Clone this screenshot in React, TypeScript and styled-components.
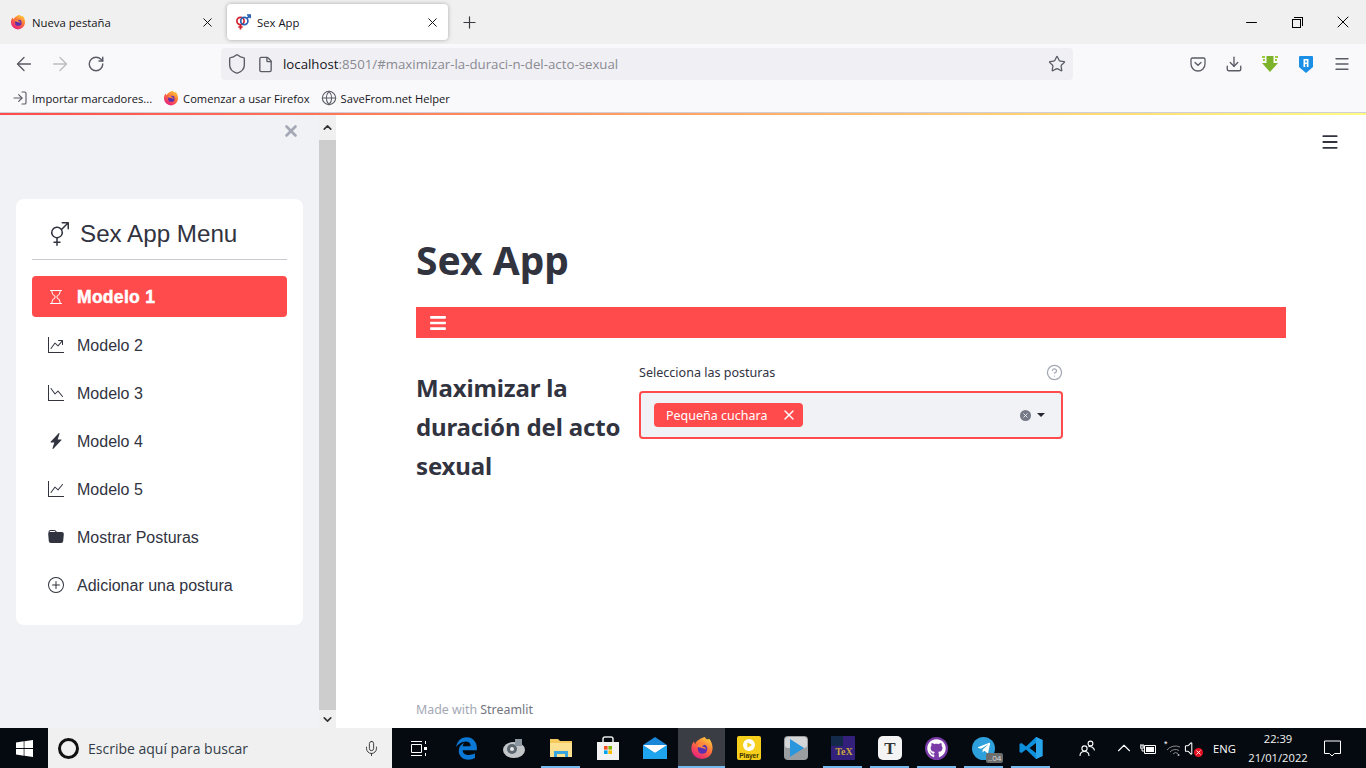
import React from "react";
import styled, { createGlobalStyle } from "styled-components";
import {
  ArrowLeft,
  ArrowRight,
  RotateCw,
  Shield,
  File,
  Star,
  Download,
  Menu,
  Plus,
  X,
  Minus,
  Globe,
  LogIn,
  Mic,
  ChevronUp,
  Volume,
  CircleHelp,
} from "lucide-react";
import {
  BsGenderAmbiguous,
  BsHourglass,
  BsGraphUpArrow,
  BsGraphDown,
  BsGraphUp,
  BsLightningChargeFill,
  BsFolderFill,
  BsPlusCircle,
} from "react-icons/bs";
import { FaBars, FaGithub, FaTelegramPlane, FaEdgeLegacy } from "react-icons/fa";

const Global = createGlobalStyle`
  html, body { margin: 0; padding: 0; height: 100%; overflow: hidden; background: #fff; }
  * { box-sizing: border-box; }
`;

const Page = styled.div`
  width: 1366px;
  height: 768px;
  display: flex;
  flex-direction: column;
  font-family: "Open Sans", "Liberation Sans", sans-serif;
`;

/* browser chrome */
const TabStrip = styled.div`
  height: 44px;
  background: #f0f0f0;
  display: flex;
  align-items: center;
  padding: 0 0 0 2px;
`;

const Tab = styled.div<{ $active?: boolean }>`
  width: 221px;
  height: 36px;
  margin-right: ${({ $active }) => ($active ? "12px" : "4px")};
  padding: 0 8px;
  display: flex;
  align-items: center;
  gap: 6px;
  border-radius: 4px;
  background: ${({ $active }) => ($active ? "#fff" : "transparent")};
  box-shadow: ${({ $active }) => ($active ? "0 0 4px rgba(0,0,0,.3)" : "none")};
  font-size: 11.3px;
  color: #15141a;
`;

const TabLabel = styled.span`
  flex: 1;
  white-space: nowrap;
`;

const StripSpacer = styled.div`
  flex: 1;
`;

const WinButton = styled.div`
  width: 46px;
  height: 44px;
  display: flex;
  align-items: center;
  justify-content: center;
  color: #000;
`;

const RestoreIcon = styled.div`
  width: 9px;
  height: 9px;
  border: 1px solid #000;
  position: relative;
  top: 1px;
  left: -1px;
  &::after {
    content: "";
    position: absolute;
    top: -3px;
    left: 1px;
    width: 8px;
    height: 8px;
    border-top: 1px solid #000;
    border-right: 1px solid #000;
  }
`;

const Toolbar = styled.div`
  height: 44px;
  background: #f9f9fb;
  display: flex;
  align-items: center;
  padding: 0 6px 4px;
  color: #5b5b66;
`;

const ToolButton = styled.div<{ $dim?: boolean }>`
  width: 36px;
  height: 32px;
  display: flex;
  align-items: center;
  justify-content: center;
  color: ${({ $dim }) => ($dim ? "#bcbcc2" : "#5b5b66")};
`;

const UrlBar = styled.div`
  width: 852px;
  height: 32px;
  margin: 0 107px;
  padding: 0 7px 0 5px;
  display: flex;
  align-items: center;
  background: #f0f0f4;
  border-radius: 4px;
  font-size: 13.25px;
  color: #8a8a92;
`;

const UrlIcon = styled.div<{ $w: number }>`
  width: ${({ $w }) => $w}px;
  display: flex;
  align-items: center;
  color: #5b5b66;
`;

const UrlText = styled.div`
  flex: 1;
  white-space: nowrap;
`;

const UrlHost = styled.span`
  color: #15141a;
`;

const BookmarkBar = styled.div`
  height: 24px;
  background: #f9f9fb;
  display: flex;
  align-items: center;
  padding: 0 0 4px 12px;
  gap: 11px;
  font-size: 11.15px;
  color: #15141a;
`;

const Bookmark = styled.div`
  display: flex;
  align-items: center;
  gap: 4px;
  white-space: nowrap;
`;

const GradientLine = styled.div`
  height: 3px;
  border-top: 1px solid #cfcfd8;
  background: linear-gradient(90deg, #ff4b4b, #fffd80);
`;

/* app body */
const Body = styled.div`
  flex: 1;
  display: flex;
  min-height: 0;
`;

const Sidebar = styled.section`
  width: 319px;
  background: #f0f2f6;
  padding: 0 16px;
`;

const SidebarClose = styled.div`
  height: 84px;
  padding: 7px 3px 0 0;
  display: flex;
  justify-content: flex-end;
  color: #a3a8b4;
`;

const MenuCard = styled.nav`
  background: #fff;
  border-radius: 8px;
  height: 426px;
  padding: 0 16px;
  font-family: "Liberation Sans", Arial, sans-serif;
  color: #31333f;
`;

const MenuHead = styled.div`
  height: 61px;
  padding: 10px 0 0 13px;
  margin-bottom: 16px;
  display: flex;
  align-items: center;
  gap: 11px;
  border-bottom: 1px solid #c9cad0;
  font-size: 24.2px;
`;

const MenuItem = styled.div<{ $active?: boolean }>`
  height: 41px;
  margin-bottom: 7px;
  padding-left: 16px;
  display: flex;
  align-items: center;
  gap: 13px;
  border-radius: 4px;
  background: ${({ $active }) => ($active ? "#ff4b4b" : "transparent")};
  color: ${({ $active }) => ($active ? "#fff" : "#31333f")};
`;

const MenuLabel = styled.span<{ $active?: boolean }>`
  padding-top: 2px;
  font-size: ${({ $active }) => ($active ? "17.5px" : "16px")};
  font-weight: ${({ $active }) => ($active ? 700 : 400)};
  -webkit-text-stroke: ${({ $active }) => ($active ? "0.5px #fff" : "0")};
  letter-spacing: ${({ $active }) => ($active ? "0.3px" : "0")};
`;

const Scrollbar = styled.div`
  width: 17px;
  background: #f0f0f0;
  display: flex;
  flex-direction: column;
  align-items: center;
  color: #333;
`;

const ScrollArrow = styled.div<{ $h: number }>`
  height: ${({ $h }) => $h}px;
  width: 100%;
  display: flex;
  align-items: center;
  justify-content: center;
`;

const ScrollThumb = styled.div`
  width: 100%;
  flex: 1;
  background: #cdcdcd;
`;

const Main = styled.main`
  flex: 1;
  display: flex;
  flex-direction: column;
  padding: 0 80px;
  color: #31333f;
  font-family: "Noto Sans", "Open Sans", sans-serif;
`;

const MenuRow = styled.div`
  height: 120px;
  margin-right: -54px;
  padding-top: 17px;
  display: flex;
  justify-content: flex-end;
  color: #31333f;
`;

const Title = styled.h1`
  margin: 0;
  height: 50px;
  line-height: 50px;
  font-size: 39px;
  font-weight: 700;
`;

const RedBar = styled.div`
  height: 31px;
  margin-top: 22px;
  padding-left: 13px;
  background: #ff4b4b;
  color: #fff;
  display: flex;
  align-items: center;
`;

const Columns = styled.div`
  margin-top: 26px;
  display: grid;
  grid-template-columns: 207px 424px;
  column-gap: 16px;
`;

const Heading = styled.h3`
  margin: 4px 0 0;
  font-size: 24px;
  line-height: 39px;
  font-weight: 700;
  letter-spacing: -0.15px;
`;

const LabelRow = styled.div`
  height: 16px;
  display: flex;
  align-items: center;
  justify-content: space-between;
  font-size: 12.55px;
`;

const HelpMark = styled.div`
  display: flex;
  color: #a3a8b4;
`;

const Select = styled.div`
  height: 48px;
  margin-top: 11px;
  padding: 0 13px;
  border: 2px solid #ff4b4b;
  border-radius: 4px;
  background: #f0f2f6;
  display: flex;
  align-items: center;
`;

const Tag = styled.div`
  height: 24px;
  width: 149px;
  padding: 0 6px 0 12px;
  display: flex;
  align-items: center;
  justify-content: space-between;
  background: #ff4b4b;
  border-radius: 4px;
  color: #fff;
  font-size: 12.5px;
  white-space: nowrap;
`;

const SelectEnd = styled.div`
  margin-left: auto;
  display: flex;
  align-items: center;
  gap: 6px;
  padding-right: 3px;
`;

const ClearDot = styled.div`
  width: 11px;
  height: 11px;
  border-radius: 50%;
  background: #767986;
  display: flex;
  align-items: center;
  justify-content: center;
  color: #f0f2f6;
`;

const Caret = styled.div`
  width: 0;
  height: 0;
  border-left: 4px solid transparent;
  border-right: 4px solid transparent;
  border-top: 4px solid #262730;
`;

const Footer = styled.div`
  margin-top: auto;
  padding-bottom: 10px;
  font-size: 12.4px;
  color: #a3a8b4;
`;

const FooterBrand = styled.span`
  color: #73757f;
`;

/* taskbar */
const Taskbar = styled.div`
  height: 40px;
  background: #050a10;
  display: flex;
  align-items: stretch;
`;

const StartButton = styled.div`
  width: 48px;
  display: flex;
  align-items: center;
  justify-content: center;
`;

const SearchBox = styled.div`
  width: 344px;
  margin-right: 4px;
  background: #f0f0f0;
  display: flex;
  align-items: center;
  padding: 0 12px 0 10px;
  font-size: 14px;
  color: #333c48;
`;

const SearchRing = styled.div`
  width: 21px;
  height: 21px;
  margin-right: 9px;
  border-radius: 50%;
  border: 3px solid #111;
`;

const SearchText = styled.div`
  flex: 1;
`;

const TaskSlot = styled.div<{ $open?: boolean; $active?: boolean }>`
  width: 47px;
  display: flex;
  align-items: center;
  justify-content: center;
  position: relative;
  background: ${({ $active }) => ($active ? "#3a3d43" : "transparent")};
  &::after {
    content: "";
    display: ${({ $open, $active }) => ($open || $active ? "block" : "none")};
    position: absolute;
    bottom: 0;
    height: 2px;
    left: ${({ $active }) => ($active ? "0" : "4px")};
    right: ${({ $active }) => ($active ? "0" : "4px")};
    background: #76b9ed;
  }
`;

const Badge = styled.span`
  position: absolute;
  left: 26px;
  bottom: 5px;
  padding: 0 2px;
  height: 10px;
  line-height: 10px;
  border-radius: 2px;
  background: #6e6e6e;
  color: #ddd;
  font-size: 8px;
`;

const IconDisc = styled.div<{ $bg: string; $size: number }>`
  width: ${({ $size }) => $size}px;
  height: ${({ $size }) => $size}px;
  border-radius: 50%;
  background: ${({ $bg }) => $bg};
  display: flex;
  align-items: center;
  justify-content: center;
  color: #fff;
`;

const Tray = styled.div`
  margin-left: auto;
  padding-right: 15px;
  display: flex;
  align-items: center;
  color: #fff;
  font-size: 11.2px;
`;

const TrayItem = styled.div<{ $w: number; $gap?: number }>`
  width: ${({ $w }) => $w}px;
  margin-right: ${({ $gap }) => $gap ?? 0}px;
  display: flex;
  align-items: center;
  justify-content: center;
  position: relative;
`;

const VolumeItem = styled(TrayItem)`
  justify-content: flex-start;
`;

const MuteMark = styled.span`
  position: absolute;
  right: 3px;
  bottom: 0;
  width: 9px;
  height: 9px;
  border-radius: 50%;
  background: #e81123;
  display: flex;
  align-items: center;
  justify-content: center;
`;

const Clock = styled.div`
  width: 70px;
  text-align: center;
  line-height: 19px;
  font-size: 11.2px;
  color: #f2f2f2;
`;

const FirefoxLogo = ({ size }: { size: number }) => (
  <svg width={size} height={size} viewBox="0 0 24 24">
    <defs>
      <linearGradient id={`ff${size}`} x1="0.8" y1="0" x2="0.2" y2="1">
        <stop offset="0" stopColor="#ffd23c" />
        <stop offset="0.45" stopColor="#ff7139" />
        <stop offset="1" stopColor="#e31587" />
      </linearGradient>
    </defs>
    <path
      d="M15 1c.8 2.5 3 3 4 1.500 2.500 2.500 3.600 6.500 3.600 10a10.600 10.600 0 1 1-21.200 0c0-3 1-5.400 2.600-7.200.1 1.200.5 2.200 1.300 2.600C6 5 10 2.500 15 1z"
      fill={`url(#ff${size})`}
    />
    <circle cx="12.5" cy="13" r="4.8" fill="#5b2fb0" />
    <path d="M7 10c2.500-2.500 6.500-3 9-1-2-.2-3.500.4-4 1.400 2 0 4 1 4 3.200-2-1.800-7-1.600-9-3.600z" fill="#ff8a3c" />
  </svg>
);

const SexFavicon = () => (
  <svg width="16" height="16" viewBox="0 0 16 16" fill="none" strokeWidth="1.7">
    <circle cx="5.5" cy="7" r="3.6" stroke="#d2202c" />
    <path d="M5.500 10.600V15.500M3.300 13h4.400" stroke="#d2202c" />
    <circle cx="9.3" cy="7" r="3.6" stroke="#2a62b5" />
    <path d="M12 4.300 15 1.300M12 1h3.300v3.300" stroke="#2a62b5" />
  </svg>
);

const PocketIcon = () => (
  <svg width="16" height="16" viewBox="0 0 16 16" fill="none" stroke="#5b5b66" strokeWidth="1.3">
    <path d="M2.300 2h11.400c.7 0 1.300.6 1.300 1.300V8A7 7 0 0 1 1 8V3.300C1 2.600 1.600 2 2.300 2z" />
    <path d="M5 6.500 8 9.300l3-2.800" strokeLinecap="round" />
  </svg>
);

const GreenArrow = () => (
  <svg width="16" height="16" viewBox="0 0 16 16">
    <path d="M4.500 0h7v7H16l-8 9-8-9h4.500z" fill="#7db32a" />
    <path d="M0 0h3v2H0zM13 0h3v2h-3zM1 3h2v2H1zM13 3h2v2h-2z" fill="#9ccb3f" />
  </svg>
);

const AddonShield = () => (
  <svg width="14" height="17" viewBox="0 0 14 17">
    <path d="M1 0h12a1 1 0 0 1 1 1v10l-7 6-7-6V1a1 1 0 0 1 1-1z" fill="#1b8fe6" />
    <path d="M4.500 3h5v8H7.800V8H6.200v3H4.500zM6.200 4.600v2h1.600v-2z" fill="#fff" />
  </svg>
);

const WindowsLogo = () => (
  <svg width="17" height="17" viewBox="0 0 17 17" fill="#fff">
    <path d="M0 2.400 7.700 1.300v6.800H0zM8.400 1.200 17 0v8.100H8.400zM0 8.900h7.700v6.800L0 14.600zM8.400 8.900H17V17l-8.600-1.200z" />
  </svg>
);

const TaskViewIcon = () => (
  <svg width="17" height="17" viewBox="0 0 17 17" fill="none" stroke="#fff">
    <path d="M.5 4.500h10v8H.5zM0 1.500h11M0 15.500h11M14.500 1v3M14.500 13v3" />
    <path d="M13 7h3v3h-3z" fill="#fff" stroke="none" />
  </svg>
);

const DiskIcon = () => (
  <svg width="24" height="24" viewBox="0 0 24 24">
    <ellipse cx="12" cy="14" rx="11" ry="8" fill="#c3c6c9" />
    <circle cx="10" cy="13" r="5" fill="#5d6770" />
    <circle cx="10" cy="13" r="2" fill="#e6e8ea" />
    <path d="M13 3h7v7h-7z" fill="#8c97a1" />
  </svg>
);

const FolderIcon = () => (
  <svg width="22" height="20" viewBox="0 0 22 20">
    <path d="M0 1h8l2 2h12v16H0z" fill="#f4c95d" />
    <path d="M0 5h22v14H0z" fill="#fbe08f" />
    <path d="M4 13h14v6h-3v-3H7v3H4z" fill="#3ba6dd" />
  </svg>
);

const StoreIcon = () => (
  <svg width="24" height="24" viewBox="0 0 24 24">
    <path d="M7 6V3a2 2 0 0 1 2-2h6a2 2 0 0 1 2 2v3" fill="none" stroke="#e6e6e6" strokeWidth="1.5" />
    <path d="M1 6h22v18H1z" fill="#f3f3f3" />
    <path d="M8 10h3.600v3.600H8z" fill="#f25022" />
    <path d="M12.400 10H16v3.600h-3.600z" fill="#7fba00" />
    <path d="M8 14.400h3.600V18H8z" fill="#00a4ef" />
    <path d="M12.400 14.400H16V18h-3.600z" fill="#ffb900" />
  </svg>
);

const MailIcon = () => (
  <svg width="24" height="22" viewBox="0 0 24 22">
    <path d="M0 8 12 0l12 8v14H0z" fill="#1a86d8" />
    <path d="M0 8h24L12 16z" fill="#fff" />
    <path d="M0 8.500 12 16 24 8.500V22H0z" fill="#1fa5ee" />
  </svg>
);

const PlayerIcon = () => (
  <svg width="24" height="24" viewBox="0 0 24 24">
    <rect width="24" height="24" rx="2" fill="#f5cf1b" />
    <circle cx="12" cy="9" r="6" fill="#fff" />
    <path d="M10.300 6.300 15 9l-4.700 2.700z" fill="#f5cf1b" />
    <text x="12" y="21.5" fontSize="6.5" fontWeight="700" textAnchor="middle" fontFamily="Liberation Sans" fill="#3a3000">
      Player
    </text>
  </svg>
);

const PlayIcon = () => (
  <svg width="24" height="24" viewBox="0 0 24 24">
    <rect width="24" height="24" rx="4" fill="#9b9ea1" />
    <rect x="1" y="1" width="22" height="11" rx="3" fill="#d4d6d8" />
    <path d="M6 3 20 12 6 21z" fill="#2a97dd" />
  </svg>
);

const TexIcon = () => (
  <svg width="24" height="24" viewBox="0 0 24 24">
    <rect width="24" height="24" rx="1" fill="#33207a" />
    <path d="M0 0h12v10H0z" fill="#132a4a" />
    <text x="13" y="19" fontSize="10" fontWeight="700" textAnchor="middle" fontFamily="Liberation Serif" fill="#c9a63a">
      TeX
    </text>
  </svg>
);

const TypeTile = () => (
  <svg width="24" height="24" viewBox="0 0 24 24">
    <rect width="24" height="24" rx="5" fill="#f4f4f4" />
    <text x="12" y="18" fontSize="17" fontWeight="700" textAnchor="middle" fontFamily="Liberation Serif" fill="#333">
      T
    </text>
  </svg>
);

const CodeIcon = () => (
  <svg width="24" height="24" viewBox="0 0 24 24">
    <path d="M17 1 23.500 4v16L17 23 7 13.500 2.500 17 .5 16V8l2-1L7 10.500z" fill="#0e8fdb" />
    <path d="M17 7 10.500 12 17 17z" fill="#050a10" />
    <path d="M17 1 23.500 4v16L17 23z" fill="#28a5ea" />
  </svg>
);

const PeopleIcon = () => (
  <svg width="17" height="17" viewBox="0 0 17 17" fill="none" stroke="#fff" strokeWidth="1.1">
    <circle cx="5.5" cy="8.5" r="2.6" />
    <path d="M1 16c0-3 2-4.500 4.500-4.500S10 13 10 16" />
    <circle cx="11.5" cy="3.5" r="2.4" />
    <path d="M9.500 6.600c2.800-.5 5.500.8 6 3.900" />
  </svg>
);

const BatteryIcon = () => (
  <svg width="17" height="13" viewBox="0 0 17 13" fill="none" stroke="#fff">
    <path d="M4.500 3.500h11v8h-11z" />
    <path d="M6 5h8v5H6z" fill="#fff" stroke="none" />
    <path d="M1 2v2M3 2v2M0 4h4v2H0zM2 6v3h2" strokeWidth="1" />
  </svg>
);

const WifiIcon = () => (
  <svg width="17" height="17" viewBox="0 0 17 17" fill="none" stroke="#8a8a8a">
    <path d="M3 10a11 11 0 0 1 13-3M6 12a7 7 0 0 1 9-1.500M9 14a3.500 3.500 0 0 1 5-.5" />
    <circle cx="14.5" cy="15" r="1" fill="#bbb" stroke="none" />
    <text x="0" y="7" fontSize="9" fill="#fff" stroke="none" fontFamily="Liberation Sans">
      *
    </text>
  </svg>
);

const BubbleIcon = () => (
  <svg width="17" height="17" viewBox="0 0 17 17" fill="none" stroke="#fff">
    <path d="M.5 1h16v12.500h-6L8 16l-2.500-2.500h-5z" />
  </svg>
);

const menuItems = [
  { label: "Modelo 2", Icon: BsGraphUpArrow },
  { label: "Modelo 3", Icon: BsGraphDown },
  { label: "Modelo 4", Icon: BsLightningChargeFill },
  { label: "Modelo 5", Icon: BsGraphUp },
  { label: "Mostrar Posturas", Icon: BsFolderFill },
  { label: "Adicionar una postura", Icon: BsPlusCircle },
];

export default function App() {
  return (
    <Page>
      <Global />
      <TabStrip>
        <Tab>
          <FirefoxLogo size={16} />
          <TabLabel>Nueva pestaña</TabLabel>
          <X size={15} strokeWidth={1.6} color="#15141a" />
        </Tab>
        <Tab $active>
          <SexFavicon />
          <TabLabel>Sex App</TabLabel>
          <X size={15} strokeWidth={1.6} color="#15141a" />
        </Tab>
        <Plus size={19} strokeWidth={1.5} color="#3a3a40" />
        <StripSpacer />
        <WinButton>
          <Minus size={17} strokeWidth={1.4} />
        </WinButton>
        <WinButton>
          <RestoreIcon />
        </WinButton>
        <WinButton>
          <X size={20} strokeWidth={1.2} />
        </WinButton>
      </TabStrip>
      <Toolbar>
        <ToolButton>
          <ArrowLeft size={22} strokeWidth={1.5} />
        </ToolButton>
        <ToolButton $dim>
          <ArrowRight size={22} strokeWidth={1.5} />
        </ToolButton>
        <ToolButton>
          <RotateCw size={18} strokeWidth={1.9} />
        </ToolButton>
        <UrlBar>
          <UrlIcon $w={31}>
            <Shield size={22} strokeWidth={1.5} />
          </UrlIcon>
          <UrlIcon $w={26}>
            <File size={17} strokeWidth={1.9} />
          </UrlIcon>
          <UrlText>
            <UrlHost>localhost</UrlHost>:8501/#maximizar-la-duraci-n-del-acto-sexual
          </UrlText>
          <Star size={18} strokeWidth={1.7} color="#5b5b66" />
        </UrlBar>
        <ToolButton>
          <PocketIcon />
        </ToolButton>
        <ToolButton>
          <Download size={18} strokeWidth={1.8} />
        </ToolButton>
        <ToolButton>
          <GreenArrow />
        </ToolButton>
        <ToolButton>
          <AddonShield />
        </ToolButton>
        <ToolButton>
          <Menu size={18} strokeWidth={1.7} />
        </ToolButton>
      </Toolbar>
      <BookmarkBar>
        <Bookmark>
          <LogIn size={16} strokeWidth={1.7} color="#5b5b66" />
          Importar marcadores...
        </Bookmark>
        <Bookmark>
          <FirefoxLogo size={16} />
          Comenzar a usar Firefox
        </Bookmark>
        <Bookmark>
          <Globe size={16} strokeWidth={1.6} color="#5b5b66" />
          SaveFrom.net Helper
        </Bookmark>
      </BookmarkBar>
      <GradientLine />
      <Body>
        <Sidebar>
          <SidebarClose>
            <X size={18} strokeWidth={3.5} />
          </SidebarClose>
          <MenuCard>
            <MenuHead>
              <BsGenderAmbiguous size={24} />
              Sex App Menu
            </MenuHead>
            <MenuItem $active>
              <BsHourglass size={16} />
              <MenuLabel $active>Modelo 1</MenuLabel>
            </MenuItem>
            {menuItems.map(({ label, Icon }) => (
              <MenuItem key={label}>
                <Icon size={16} />
                <MenuLabel>{label}</MenuLabel>
              </MenuItem>
            ))}
          </MenuCard>
        </Sidebar>
        <Scrollbar>
          <ScrollArrow $h={25}>
            <ChevronUp size={13} strokeWidth={3} />
          </ScrollArrow>
          <ScrollThumb />
          <ScrollArrow $h={18}>
            <ChevronUp size={13} strokeWidth={3} style={{ transform: "rotate(180deg)" }} />
          </ScrollArrow>
        </Scrollbar>
        <Main>
          <MenuRow>
            <Menu size={20} strokeWidth={2.2} />
          </MenuRow>
          <Title>Sex App</Title>
          <RedBar>
            <FaBars size={18} />
          </RedBar>
          <Columns>
            <Heading>Maximizar la duración del acto sexual</Heading>
            <div>
              <LabelRow>
                Selecciona las posturas
                <HelpMark>
                  <CircleHelp size={17} strokeWidth={1.8} />
                </HelpMark>
              </LabelRow>
              <Select>
                <Tag>
                  Pequeña cuchara
                  <X size={16} strokeWidth={2} />
                </Tag>
                <SelectEnd>
                  <ClearDot>
                    <X size={7} strokeWidth={3} />
                  </ClearDot>
                  <Caret />
                </SelectEnd>
              </Select>
            </div>
          </Columns>
          <Footer>
            Made with <FooterBrand>Streamlit</FooterBrand>
          </Footer>
        </Main>
      </Body>
      <Taskbar>
        <StartButton>
          <WindowsLogo />
        </StartButton>
        <SearchBox>
          <SearchRing />
          <SearchText>Escribe aquí para buscar</SearchText>
          <Mic size={17} strokeWidth={1.2} color="#222" />
        </SearchBox>
        <TaskSlot>
          <TaskViewIcon />
        </TaskSlot>
        <TaskSlot>
          <FaEdgeLegacy size={23} color="#0a78d4" />
        </TaskSlot>
        <TaskSlot>
          <DiskIcon />
        </TaskSlot>
        <TaskSlot $open>
          <FolderIcon />
        </TaskSlot>
        <TaskSlot>
          <StoreIcon />
        </TaskSlot>
        <TaskSlot>
          <MailIcon />
        </TaskSlot>
        <TaskSlot $active>
          <FirefoxLogo size={24} />
        </TaskSlot>
        <TaskSlot>
          <PlayerIcon />
        </TaskSlot>
        <TaskSlot>
          <PlayIcon />
        </TaskSlot>
        <TaskSlot $open>
          <TexIcon />
        </TaskSlot>
        <TaskSlot $open>
          <TypeTile />
        </TaskSlot>
        <TaskSlot $open>
          <IconDisc $bg="#7a3ba8" $size={23}>
            <FaGithub size={19} />
          </IconDisc>
        </TaskSlot>
        <TaskSlot $open>
          <IconDisc $bg="#2ea0dc" $size={23}>
            <FaTelegramPlane size={14} />
          </IconDisc>
          <Badge>..04</Badge>
        </TaskSlot>
        <TaskSlot $open>
          <CodeIcon />
        </TaskSlot>
        <Tray>
          <TrayItem $w={24} $gap={13}>
            <PeopleIcon />
          </TrayItem>
          <TrayItem $w={24}>
            <ChevronUp size={22} strokeWidth={1.2} />
          </TrayItem>
          <TrayItem $w={24}>
            <BatteryIcon />
          </TrayItem>
          <TrayItem $w={24}>
            <WifiIcon />
          </TrayItem>
          <VolumeItem $w={22}>
            <Volume size={17} strokeWidth={1.5} />
            <MuteMark>
              <X size={7} strokeWidth={3} />
            </MuteMark>
          </VolumeItem>
          <TrayItem $w={37}>ENG</TrayItem>
          <Clock>
            22:39
            <br />
            21/01/2022
          </Clock>
          <TrayItem $w={38}>
            <BubbleIcon />
          </TrayItem>
        </Tray>
      </Taskbar>
    </Page>
  );
}
